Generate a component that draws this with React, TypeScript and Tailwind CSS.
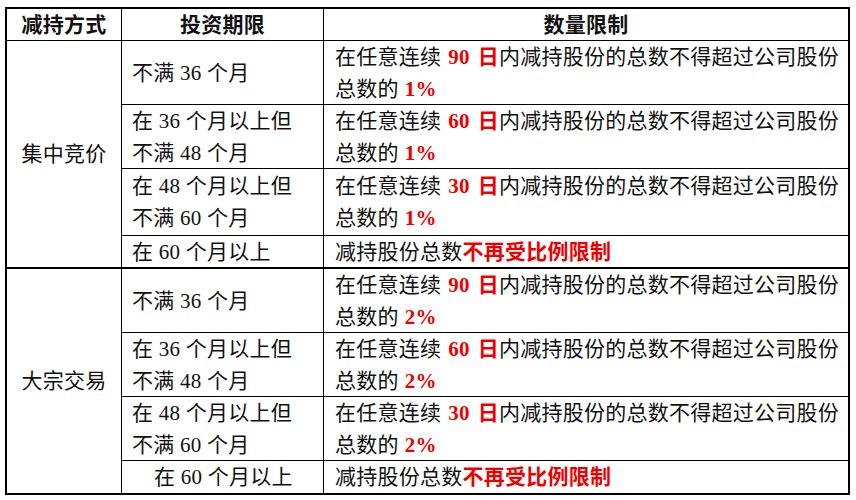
const groups = [
  {
    name: "集中竞价",
    pct: "1%",
    rows: [
      { term: ["不满 36 个月"], days: "90" },
      { term: ["在 36 个月以上但", "不满 48 个月"], days: "60" },
      { term: ["在 48 个月以上但", "不满 60 个月"], days: "30" },
      { term: ["在 60 个月以上"], days: null },
    ],
  },
  {
    name: "大宗交易",
    pct: "2%",
    rows: [
      { term: ["不满 36 个月"], days: "90" },
      { term: ["在 36 个月以上但", "不满 48 个月"], days: "60" },
      { term: ["在 48 个月以上但", "不满 60 个月"], days: "30" },
      { term: ["在 60 个月以上"], days: null, indent: true },
    ],
  },
];

function Limit({ days, pct }: { days: string | null; pct: string }) {
  if (!days) {
    return (
      <span>
        减持股份总数<b className="font-bold text-[#ee0000]">不再受比例限制</b>
      </span>
    );
  }
  return (
    <span>
      在任意连续
      <b className="ml-[7px] mr-[8px] font-bold text-[#ee0000]">{days}</b>
      <b className="font-bold text-[#ee0000]">日</b>
      内减持股份的总数不得超过公司股份
      <br />
      总数的<b className="ml-[6px] font-bold text-[#ee0000]">{pct}</b>
    </span>
  );
}

export default function App() {
  return (
    <div className="w-[856px] h-[500px] bg-white pt-[7px] pl-[5px] font-['Liberation_Serif','Noto_Sans_CJK_SC',serif] text-[21px] leading-[32px] tracking-[0.25px] text-[#111]">
      <div className="w-[845px] border-2 border-black">
        <div className="grid grid-cols-[115px_202px_1fr] grid-rows-[32px_64px_64px_67px_33px_64px_64px_64px_32px]">
          {/* header */}
          <div className="flex items-center justify-center border-r-[1.5px] border-b-[1.5px] border-black font-bold">
            减持方式
          </div>
          <div className="flex items-center justify-center border-r-[1.5px] border-b-[1.5px] border-black font-bold">
            投资期限
          </div>
          <div className="flex items-center justify-center border-b-[1.5px] border-black font-bold">
            数量限制
          </div>

          {groups.map((g, gi) => (
            <>
              <div
                key={g.name}
                className={
                  gi === 0
                    ? "row-span-4 flex items-center justify-center border-r-[1.5px] border-b-2 border-black"
                    : "row-span-4 flex items-center justify-center border-r-[1.5px] border-black"
                }
              >
                {g.name}
              </div>
              {g.rows.map((r, ri) => {
                const last = gi === 1 && ri === 3;
                const groupEnd = gi === 0 && ri === 3;
                const bottom = last ? "" : groupEnd ? "border-b-2" : "border-b-[1.5px]";
                return (
                  <>
                    <div
                      key={`t${gi}${ri}`}
                      className={`flex flex-col justify-center border-r-[1.5px] border-black ${bottom} ${
                        r.indent ? "pl-[32px]" : "pl-[10px]"
                      }`}
                    >
                      {r.term.map((t) => (
                        <span key={t}>{t}</span>
                      ))}
                    </div>
                    <div
                      key={`l${gi}${ri}`}
                      className={`flex items-center border-black pl-[11px] ${bottom}`}
                    >
                      <Limit days={r.days} pct={g.pct} />
                    </div>
                  </>
                );
              })}
            </>
          ))}
        </div>
      </div>
    </div>
  );
}
